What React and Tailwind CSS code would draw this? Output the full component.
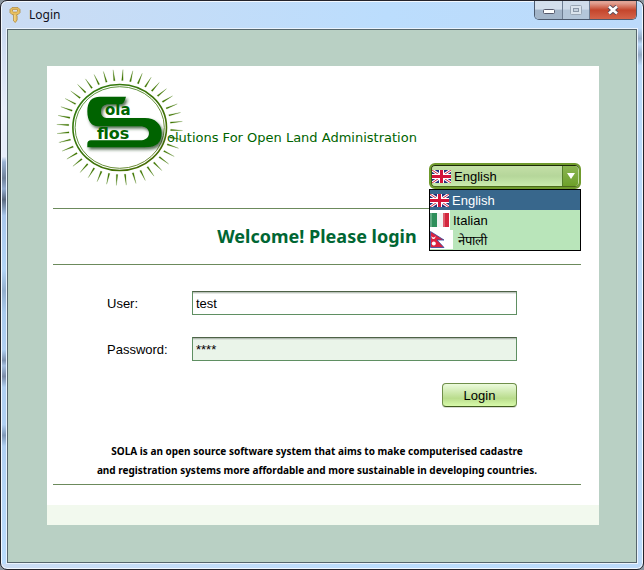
import React from "react";

const RAYS = Array.from({ length: 40 }, (_, i) => i * 9 + 3);

function ray(deg) {
  const a = (deg * Math.PI) / 180;
  const d = 0.015;
  const at = (angle, rx, ry) =>
    `${(66.7 + rx * Math.sin(angle)).toFixed(2)},${(61.5 - ry * Math.cos(angle)).toFixed(2)}`;
  return `${at(a - d, 51, 47)} ${at(a, 63, 58)} ${at(a + d, 51, 47)}`;
}

function Logo() {
  return (
    <svg width="374" height="122" viewBox="0 0 374 122" className="block shrink-0" role="img" aria-label="SOLA FLOSS">
      <defs>
        <filter id="soft" x="-20%" y="-20%" width="150%" height="150%">
          <feDropShadow dx="5" dy="7" stdDeviation="4" floodColor="#1d3d1d" floodOpacity="0.75" />
        </filter>
        <linearGradient id="ring" x1="0" y1="0" x2="1" y2="1">
          <stop offset="0" stopColor="#2e7d10" />
          <stop offset="1" stopColor="#4a6a00" />
        </linearGradient>
      </defs>
      {RAYS.map((deg) => (
        <polygon key={deg} points={ray(deg)} fill="#3f7600" stroke="#3f7600" strokeWidth="0.2" />
      ))}
      <ellipse cx="66.7" cy="61.5" rx="46.8" ry="43" fill="none" stroke="url(#ring)" strokeWidth="1.6" />
      <ellipse cx="66.7" cy="61.5" rx="44.6" ry="40.8" fill="none" stroke="url(#ring)" strokeWidth="0.8" />
      <g transform="translate(-8 -2) scale(0.3333)">
        <path
          filter="url(#soft)"
          fill="#006400"
          d="M243 98H165C140 98 127 112 127 142C127 172 140 187 160 187H285C300 187 312 195 312 207C312 222 300 229 285 229H138Q127 229 127 240V250H300C335 250 350 235 350 207C350 180 330 162 300 162H190C175 162 168 155 168 143C168 128 178 121 192 121H225Q238 121 243 98Z"
        />
      </g>
      <g fill="#006400" fontFamily="'DejaVu Sans', sans-serif">
        <text x="52" y="49" fontSize="15" fontWeight="700">ola</text>
        <text x="44" y="73" fontSize="16" fontWeight="700">flos</text>
        <text x="114" y="76" fontSize="13">olutions For Open Land Administration</text>
      </g>
    </svg>
  );
}

function UkFlag() {
  return (
    <svg width="19" height="13" viewBox="0 0 19 13" className="block shrink-0" aria-hidden="true">
      <rect width="19" height="13" fill="#23307c" />
      <path d="M0 0L19 13M19 0L0 13" stroke="#fff" strokeWidth="3" />
      <path d="M0 0L19 13M19 0L0 13" stroke="#d2233c" strokeWidth="1" />
      <path d="M9.5 0V13M0 6.5H19" stroke="#fff" strokeWidth="5" />
      <path d="M9.5 0V13M0 6.5H19" stroke="#d2143a" strokeWidth="3" />
    </svg>
  );
}

function ItalyFlag() {
  return (
    <svg width="20" height="20" viewBox="0 0 20 20" className="block shrink-0" aria-hidden="true">
      <rect width="20" height="20" fill="#fff" />
      <rect y="3" width="7" height="14" fill="#2f8f5b" />
      <rect x="7" y="3" width="6" height="14" fill="#f3f3f3" />
      <rect x="13" y="3" width="6" height="14" fill="#d3273e" />
      <path d="M1 3V17M14 3V17" stroke="#fff" strokeOpacity="0.25" strokeWidth="2" />
    </svg>
  );
}

function NepalFlag() {
  return (
    <svg width="23" height="20" viewBox="0 0 23 20" className="block shrink-0" aria-hidden="true">
      <rect width="23" height="19" fill="#fff" />
      <path d="M0.5 1.5L14 10H7L14 17.5H0.5Z" fill="#dc2340" stroke="#2f4a9c" strokeWidth="0.8" />
      <path d="M1.5 6Q3.5 9 5.5 6Q5.5 9 3.5 9Q1.5 9 1.5 6Z" fill="#fff" />
      <circle cx="3.8" cy="13.5" r="2" fill="#fff" />
    </svg>
  );
}

function KeyIcon() {
  return (
    <svg width="12" height="16" viewBox="0 0 12 16" className="block shrink-0" aria-hidden="true">
      <path
        d="M3 0.6H9L11 2.6V5.6L9 7.6H7.7V9L8.5 10L7.7 11L8.5 12L7.7 13V14L6.2 15.4L4.6 14V7.6H3L1 5.6V2.6Z"
        fill="#e8c060"
        stroke="#b08a40"
        strokeWidth="0.8"
      />
      <path d="M3.5 2.6H8.5V4.2L7.4 5H4.6L3.5 4.2Z" fill="#dbe6f5" stroke="#a8792a" strokeWidth="0.6" />
      <path d="M5.8 8V14" stroke="#fbe5a0" strokeWidth="0.8" />
    </svg>
  );
}

function TitleBar() {
  return (
    <header className="flex h-[27px] items-start justify-between pl-2">
      <div className="flex items-center gap-2 pt-1 font-['Noto_Sans','Open_Sans',sans-serif] text-xs leading-5 text-[#101020]">
        <KeyIcon />
        <span>Login</span>
      </div>
      <div className="mr-1.5 flex h-[19px] overflow-hidden rounded-b-[5px] border border-t-0 border-[#4c5a6e]">
        <button type="button" aria-label="Minimize" className="flex w-7 items-center justify-center border-r border-[#6d7d92] bg-linear-to-b from-[#d3dfec] from-45% to-[#a3b5c9] to-50%">
          <svg width="12" height="6" viewBox="0 0 12 6" className="mt-1">
            <rect x="0.5" y="0.5" width="11" height="4" rx="1" fill="#fff" stroke="#55596b" />
          </svg>
        </button>
        <button type="button" aria-label="Maximize" disabled className="flex w-[27px] items-center justify-center border-r border-[#6d7d92] bg-linear-to-b from-[#cfdcea] from-45% to-[#b4c6d9] to-50%">
          <svg width="12" height="10" viewBox="0 0 12 10">
            <rect x="0.5" y="0.5" width="11" height="9" rx="1" fill="#dbe4ed" stroke="#9aa7b5" />
            <rect x="3.5" y="3.5" width="5" height="3" fill="#c6d2de" stroke="#8b98a8" />
          </svg>
        </button>
        <button type="button" aria-label="Close" className="flex w-[46px] items-center justify-center bg-linear-to-b from-[#e2a294] from-10% via-[#c4452c] via-50% to-[#d4644a]">
          <svg width="12" height="10" viewBox="0 0 12 10">
            <path d="M2 1.5L10 8.5M10 1.5L2 8.5" stroke="#55495a" strokeWidth="4.4" />
            <path d="M2 1.5L10 8.5M10 1.5L2 8.5" stroke="#fff" strokeWidth="2.6" />
          </svg>
        </button>
      </div>
    </header>
  );
}

function LanguagePicker() {
  return (
    <div className="relative w-[152px] shrink-0 font-['Liberation_Sans',Arial,sans-serif] text-[13px] text-black">
      <select
        aria-label="Language"
        defaultValue="en"
        className="block h-[26px] w-full appearance-none rounded-[6px] border-2 border-[#6f9a2c] bg-linear-to-b from-[#c5e0a8] via-[#b5d69a] via-50% to-[#cdeeb0] pt-0.5 pl-[23px] shadow-[inset_0_1px_0_#1c2a08,inset_1px_0_0_#3c5a14,inset_0_-1px_0_#4c6a1c]"
      >
        <option value="en">English</option>
        <option value="it">Italian</option>
        <option value="ne">नेपाली</option>
      </select>
      <span className="pointer-events-none absolute top-[7px] left-[3px]">
        <UkFlag />
      </span>
      <span className="pointer-events-none absolute top-[3px] right-[3px] flex h-5 w-4 items-center justify-center rounded-r-[3px] border-l border-[#55802a] bg-linear-to-b from-[#8bb552] to-[#6da029]">
        <svg width="8" height="6" viewBox="0 0 8 6" aria-hidden="true">
          <path d="M0 0H8L4 6Z" fill="#fff" />
        </svg>
      </span>
      <ul role="listbox" aria-label="Languages" className="absolute top-full left-0 z-10 w-full border border-black bg-[#b9e5ba]">
        <li role="option" aria-selected="true" className="flex h-5 items-center gap-[3px] bg-[#38678c] text-white">
          <UkFlag />
          <span className="pt-0.5">English</span>
        </li>
        <li role="option" aria-selected="false" className="flex h-5 items-center gap-[3px]">
          <ItalyFlag />
          <span className="pt-0.5">Italian</span>
        </li>
        <li role="option" aria-selected="false" className="flex h-5 items-center gap-[5px]">
          <NepalFlag />
          <span lang="ne" className="pt-0.5">नेपाली</span>
        </li>
      </ul>
    </div>
  );
}

export default function App() {
  return (
    <div className="flex min-h-screen flex-col bg-[#8b96a0]">
      <div className="flex flex-1 flex-col rounded-[7px] border border-[#23232b] bg-linear-to-r from-[#cbdcf3] via-[#bbddfd] via-60% to-[#bcdafa] shadow-[inset_0_0_0_1px_#f2f8ff]">
        <TitleBar />
        <div className="mb-[5px] flex flex-1 px-px">
          <div className="w-1 bg-[linear-gradient(to_bottom,#c9d9f0_0%,#e6edf9_15%,#e6edf9_24%,#9ab3d3_25%,#6f8199_28%,#93acce_30%,#5a6a80_32%,#a9c8ec_35%,#b3d5f7_45%,#93afce_49%,#a9cbee_53%,#b0d0f2_60%,#7f93b0_62%,#a5c0e0_63%,#7b8ca8_65%,#b0d0f2_67%,#b0d0f2_74%,#7f98b8_76%,#b0d0f2_78%,#bbddfd_100%)]" />
          <div className="flex flex-1 flex-col border border-[#eaf3fd]">
            <main className="flex flex-1 flex-col border border-[#56666c] bg-[#b9d0c4] pt-9 pr-[37px] pb-[37px] pl-[39px]">
              <section className="flex-1 bg-white">
                <div className="pr-[18px] pl-[6px]">
                  <div className="flex items-start justify-between pb-[19px]">
                    <Logo />
                    <div className="-ml-4 pt-[97px]">
                      <LanguagePicker />
                    </div>
                  </div>
                  <h1 className="border-y border-[#6c8a5c] py-4 text-center font-['Noto_Sans',Tahoma,sans-serif] text-lg leading-[23px] font-bold text-[#006633]">
                    Welcome! Please login
                  </h1>
                  <form
                    onSubmit={(e) => e.preventDefault()}
                    className="grid grid-cols-[85px_1fr] items-center gap-y-[22px] py-[26px] pr-16 pl-[54px] font-['Liberation_Sans',Arial,sans-serif] text-[13px] text-black"
                  >
                    <label htmlFor="user" className="pt-0.5">User:</label>
                    <input
                      id="user"
                      type="text"
                      defaultValue="test"
                      className="h-6 w-full border border-[#5f8f62] border-t-[#4e6247] bg-white px-[3px] shadow-[inset_0_1px_0_#bcc4bc,inset_0_2px_0_#e4e8e4] outline-none"
                    />
                    <label htmlFor="password" className="pt-0.5">Password:</label>
                    <input
                      id="password"
                      type="text"
                      autoComplete="off"
                      defaultValue="****"
                      className="h-6 w-full border border-[#5f8f62] border-t-[#4e6247] bg-[#eaf4e9] px-[3px] shadow-[inset_0_1px_0_#b2bcb2,inset_0_2px_0_#d8e0d8] outline-none"
                    />
                    <button
                      type="submit"
                      className="col-start-2 h-6 w-[75px] justify-self-end rounded-[4px] border border-[#6f8f4a] border-b-[#3f5a1c] bg-linear-to-b from-[#ecfbdc] via-[#b9dc8c] via-65% to-[#d8fbaa] pt-0.5 shadow-[0_1px_0_#d8dcd4]"
                    >
                      Login
                    </button>
                  </form>
                  <p className="border-b border-[#6c8a5c] pt-[9px] pb-1 text-center font-['Noto_Sans',Tahoma,sans-serif] text-[10px] leading-[19px] font-bold text-black">
                    SOLA is an open source software system that aims to make computerised cadastre
                    <br />
                    and registration systems more affordable and more sustainable in developing countries.
                  </p>
                </div>
                <div className="mt-5 h-5 bg-[#f2f9ee]" />
              </section>
            </main>
          </div>
          <div className="w-1 bg-[linear-gradient(to_bottom,#bcdafa_0%,#93a9c4_2%,#bcdafa_3%,#93a9c4_5%,#bcdafa_7%,#bcdafa_100%)]" />
        </div>
      </div>
    </div>
  );
}
